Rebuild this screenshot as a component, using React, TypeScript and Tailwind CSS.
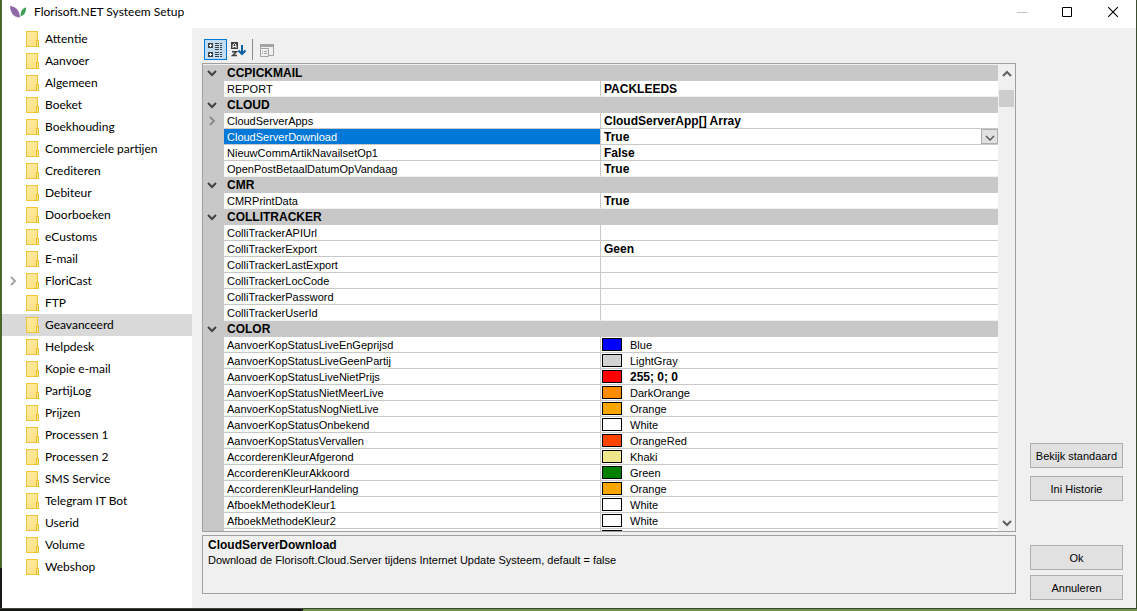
const folders = [
  'Attentie', 'Aanvoer', 'Algemeen', 'Boeket', 'Boekhouding', 'Commerciele partijen', 'Crediteren',
  'Debiteur', 'Doorboeken', 'eCustoms', 'E-mail', 'FloriCast', 'FTP', 'Geavanceerd', 'Helpdesk',
  'Kopie e-mail', 'PartijLog', 'Prijzen', 'Processen 1', 'Processen 2', 'SMS Service',
  'Telegram IT Bot', 'Userid', 'Volume', 'Webshop',
];

type Row = {
  name: string;
  value?: string;
  category?: boolean;
  plain?: boolean;
  swatch?: string;
  expandable?: boolean;
  selected?: boolean;
};

const rows: Row[] = [
  { name: 'CCPICKMAIL', category: true },
  { name: 'REPORT', value: 'PACKLEEDS' },
  { name: 'CLOUD', category: true },
  { name: 'CloudServerApps', value: 'CloudServerApp[] Array', expandable: true },
  { name: 'CloudServerDownload', value: 'True', selected: true },
  { name: 'NieuwCommArtikNavailsetOp1', value: 'False' },
  { name: 'OpenPostBetaalDatumOpVandaag', value: 'True' },
  { name: 'CMR', category: true },
  { name: 'CMRPrintData', value: 'True' },
  { name: 'COLLITRACKER', category: true },
  { name: 'ColliTrackerAPIUrl' },
  { name: 'ColliTrackerExport', value: 'Geen' },
  { name: 'ColliTrackerLastExport' },
  { name: 'ColliTrackerLocCode' },
  { name: 'ColliTrackerPassword' },
  { name: 'ColliTrackerUserId' },
  { name: 'COLOR', category: true },
  { name: 'AanvoerKopStatusLiveEnGeprijsd', value: 'Blue', plain: true, swatch: 'bg-[#0000ff]' },
  { name: 'AanvoerKopStatusLiveGeenPartij', value: 'LightGray', plain: true, swatch: 'bg-[#d3d3d3]' },
  { name: 'AanvoerKopStatusLiveNietPrijs', value: '255; 0; 0', swatch: 'bg-[#ff0000]' },
  { name: 'AanvoerKopStatusNietMeerLive', value: 'DarkOrange', plain: true, swatch: 'bg-[#ff8c00]' },
  { name: 'AanvoerKopStatusNogNietLive', value: 'Orange', plain: true, swatch: 'bg-[#ffa500]' },
  { name: 'AanvoerKopStatusOnbekend', value: 'White', plain: true, swatch: 'bg-white' },
  { name: 'AanvoerKopStatusVervallen', value: 'OrangeRed', plain: true, swatch: 'bg-[#ff4500]' },
  { name: 'AccorderenKleurAfgerond', value: 'Khaki', plain: true, swatch: 'bg-[#f0e68c]' },
  { name: 'AccorderenKleurAkkoord', value: 'Green', plain: true, swatch: 'bg-[#008000]' },
  { name: 'AccorderenKleurHandeling', value: 'Orange', plain: true, swatch: 'bg-[#ffa500]' },
  { name: 'AfboekMethodeKleur1', value: 'White', plain: true, swatch: 'bg-white' },
  { name: 'AfboekMethodeKleur2', value: 'White', plain: true, swatch: 'bg-white' },
  { name: '', plain: true, swatch: 'bg-white' },
];

function Chevron({ dir, className }: { dir: 'down' | 'up' | 'right'; className: string }) {
  const d = { down: 'M1 3l4 4 4-4', up: 'M1 7l4-4 4 4', right: 'M3 1l4 4-4 4' }[dir];
  return (
    <svg viewBox="0 0 10 10" className={`size-[10px] shrink-0 ${className}`} fill="none" stroke="currentColor" strokeWidth="2" aria-hidden="true">
      <path d={d} />
    </svg>
  );
}

function FolderIcon() {
  return (
    <svg viewBox="0 0 13 16" className="h-4 w-[13px] shrink-0" aria-hidden="true">
      <defs>
        <linearGradient id="folder" x1="0" y1="0" x2="1" y2="1">
          <stop offset="0" stopColor="#ffeca6" />
          <stop offset="1" stopColor="#fddf7c" />
        </linearGradient>
      </defs>
      <rect x=".5" y=".5" width="11" height="15" fill="url(#folder)" stroke="#ecc53a" />
      <rect x="10.5" y="9.5" width="2" height="6" fill="#ffe89c" stroke="#e9bf2c" />
    </svg>
  );
}

function TitleBar() {
  return (
    <header className="flex h-7 shrink-0 items-center bg-white pb-1 pl-2">
      <svg viewBox="0 0 16 12" className="h-3 w-4" aria-hidden="true">
        <path d="M0 0C4.500 0 9.600 3.500 10 11.500C4 11.500 .3 7 0 0z" fill="#8e67a8" />
        <path d="M10.700 10.500C10.200 6 12 2.500 16 1.300c.3 4.700-1.500 7.700-5.300 9.200z" fill="#3f9f52" />
      </svg>
      <h1 className="ml-2 flex-1 font-[Lato,sans-serif] text-[12px] leading-4 text-black">Florisoft.NET Systeem Setup</h1>
      <div className="flex h-full items-center">
        <button aria-label="Minimaliseren" className="flex h-full w-[45px] items-center justify-center text-[#c4c4c4]">
          <svg viewBox="0 0 10 10" className="size-[10px]" stroke="currentColor"><path d="M0 5.500h10" /></svg>
        </button>
        <button aria-label="Maximaliseren" className="flex h-full w-[46px] items-center justify-center text-black">
          <svg viewBox="0 0 10 10" className="size-[10px]" fill="none" stroke="currentColor"><path d="M.5.5h9v9h-9z" /></svg>
        </button>
        <button aria-label="Sluiten" className="flex h-full w-[46px] items-center justify-center text-black">
          <svg viewBox="0 0 10 10" className="size-[10px]" stroke="currentColor" strokeWidth="1.1"><path d="M0 0l10 10M10 0L0 10" /></svg>
        </button>
      </div>
    </header>
  );
}

function Sidebar() {
  return (
    <nav className="w-[190px] shrink-0 overflow-hidden bg-white font-[Lato,sans-serif] text-[12px] leading-4 text-black">
      {folders.map((f) => (
        <button key={f} className={`flex h-[22px] w-full items-center pl-[6px] text-left ${f === 'Geavanceerd' ? 'bg-[#d9d9d9]' : ''}`}>
          <span className="flex w-[18px] shrink-0 text-[#a6a6a6]">{f === 'FloriCast' && <Chevron dir="right" className="" />}</span>
          <FolderIcon />
          <span className="ml-[6px] whitespace-nowrap">{f}</span>
        </button>
      ))}
    </nav>
  );
}

function Toolbar() {
  return (
    <div className="flex h-[23px] shrink-0 items-start pl-[2px]">
      <button aria-label="Gecategoriseerd" className="flex h-[21px] w-[23px] items-center justify-center border border-[#0078d7] bg-[#c0dcf3]">
        <svg viewBox="0 0 15 15" className="size-[15px]" aria-hidden="true">
          <path d="M0 1h5v5H0zM0 10h5v5H0z" fill="#404040" />
          <path d="M1 3.500h3M2.500 2v3M1 12.500h3M2.500 11v3" stroke="#fff" />
          <path d="M7 1.500h4M7 3.500h4M7 5.500h4M7 7.500h4M7 10.500h4M7 12.500h4M7 14.500h4M12 1.500h2M12 3.500h2M12 5.500h2M12 7.500h2M12 10.500h2M12 12.500h2M12 14.500h2" stroke="#404040" />
        </svg>
      </button>
      <button aria-label="Alfabetisch" className="flex h-[21px] w-[23px] items-center justify-center">
        <svg viewBox="0 0 15 15" className="size-[15px]" aria-hidden="true">
          <path d="M0 0h7v7H0z" fill="#404040" />
          <path d="M2 6V3l1.500-1.500L5 3v3M2 4.500h3" fill="none" stroke="#fff" />
          <path d="M1 9.700h4.500L1.500 13.500H6" fill="none" stroke="#404040" strokeWidth="1.500" />
          <path d="M11 3v9M7.500 8.500l3.500 3.500L14.500 8.500" fill="none" stroke="#0b5f9e" strokeWidth="2" />
        </svg>
      </button>
      <span className="ml-[2px] h-[21px] w-px bg-[#8a8a8a]" />
      <button aria-label="Eigenschappenpagina's" disabled className="ml-[2px] flex h-[21px] w-[23px] items-center justify-center">
        <svg viewBox="0 0 14 14" className="size-[14px]" aria-hidden="true">
          <path d="M0 1h14v3H0z" fill="#a3a3a3" />
          <path d="M.5 1v4M13.500 1v11.500H9" fill="none" stroke="#a3a3a3" />
          <path d="M.5 5.500h8v8h-8z" fill="#f0f0f0" stroke="#a3a3a3" />
          <path d="M2 8.500h1M4 8.500h3M2 10.500h1M4 10.500h3" stroke="#a3a3a3" />
        </svg>
      </button>
    </div>
  );
}

function PropertyRow({ row, beforeCategory }: { row: Row; beforeCategory: boolean }) {
  if (row.category) {
    return (
      <tr className="h-4 bg-[#c8c8c8]">
        <td className="p-0"><Chevron dir="down" className="ml-[4px] text-[#404040]" /></td>
        <th colSpan={2} scope="colgroup" className="p-0 pl-[3px] text-left text-[12px] leading-[15px] font-bold">{row.name}</th>
      </tr>
    );
  }
  const line = beforeCategory ? 'border-[#f0f0f0]' : 'border-[#c8c8c8]';
  return (
    <tr className="h-4">
      <td className="bg-[#c8c8c8] p-0">{row.expandable && <Chevron dir="right" className="ml-[4px] text-[#8c8c8c]" />}</td>
      <th scope="row" className={`border-b p-0 pt-px pl-[3px] text-left font-normal ${line} ${row.selected ? 'bg-[#0078d7] text-white' : ''}`}>{row.name}</th>
      <td className={`border-b border-l border-l-[#c8c8c8] p-0 ${line}`}>
        {row.selected ? (
          <div className="relative flex h-[15px]">
            <select aria-label={row.name} defaultValue="True" className="w-full appearance-none pt-px pl-[3px] text-[12px] leading-[14px] font-bold outline-none">
              <option>True</option>
              <option>False</option>
            </select>
            <span className="pointer-events-none absolute top-0 right-0 flex h-[15px] w-[17px] items-center justify-center border border-[#adadad] bg-[#e1e1e1]">
              <svg viewBox="0 0 10 10" className="size-[10px]" fill="none" stroke="#505050" strokeWidth="1.300"><path d="M1 4l4 4 4-4" /></svg>
            </span>
          </div>
        ) : (
          <div className={`flex h-[15px] items-center ${row.swatch ? 'pl-px' : 'pl-[3px]'}`}>
            {row.swatch && <span className={`mr-2 h-[13px] w-[20px] border border-black ${row.swatch}`} />}
            <span className={`pt-px ${row.plain ? '' : 'text-[12px] font-bold'}`}>{row.value}</span>
          </div>
        )}
      </td>
    </tr>
  );
}

function PropertyGrid() {
  return (
    <div className="flex min-h-0 flex-1 overflow-hidden border border-[#a0a0a0] pt-px">
      <div className="min-w-0 flex-1 overflow-hidden bg-white">
        <table className="w-full table-fixed border-separate border-spacing-0 text-[11px] leading-[14px] text-black">
          <colgroup>
            <col className="w-[21px]" />
            <col className="w-[376px]" />
            <col />
          </colgroup>
          <tbody>
            {rows.map((row, i) => (
              <PropertyRow key={i} row={row} beforeCategory={!!rows[i + 1]?.category} />
            ))}
          </tbody>
        </table>
      </div>
      <div className="flex w-[17px] shrink-0 flex-col items-center text-[#606060]">
        <button aria-label="Omhoog" className="flex h-[17px] w-full items-center justify-center"><Chevron dir="up" className="" /></button>
        <div className="flex w-full flex-1 flex-col pt-[8px] pr-px pl-px">
          <div className="h-[17px] bg-[#cdcdcd]" />
        </div>
        <button aria-label="Omlaag" className="flex h-[17px] w-full items-center justify-center"><Chevron dir="down" className="" /></button>
      </div>
    </div>
  );
}

function ActionButton({ children }: { children: string }) {
  return (
    <button className="h-[25px] w-full border border-[#adadad] bg-[#e1e1e1] text-[11px] leading-4 whitespace-nowrap text-black">{children}</button>
  );
}

export default function App() {
  return (
    <div className="flex h-screen flex-col overflow-hidden font-['Liberation_Sans',sans-serif]">
      <div className="flex min-h-0 flex-1">
        <div className="flex w-[2px] shrink-0 flex-col bg-[#47682a]">
          <span className="mt-auto h-10 bg-[#17171a]" />
        </div>
        <main className="flex min-w-0 flex-1 flex-col bg-[#f0f0f0]">
          <TitleBar />
          <div className="flex min-h-0 flex-1">
            <Sidebar />
            <section className="flex min-w-0 flex-1 flex-col pt-[11px] pb-[14px] pl-[10px]">
              <Toolbar />
              <div className="mt-px flex min-h-0 flex-1 flex-col">
                <PropertyGrid />
                <div className="mt-[3px] h-[59px] shrink-0 border border-[#a0a0a0] pt-[2px] pl-[5px] text-black">
                  <h2 className="text-[12px] leading-[15px] font-bold">CloudServerDownload</h2>
                  <p className="text-[11px] leading-[15px]">Download de Florisoft.Cloud.Server tijdens Internet Update Systeem, default = false</p>
                </div>
              </div>
            </section>
            <aside className="flex w-[120px] shrink-0 flex-col justify-end gap-[5px] pr-[13px] pb-2 pl-[14px]">
              <div className="mb-[39px] flex flex-col gap-2">
                <ActionButton>Bekijk standaard</ActionButton>
                <ActionButton>Ini Historie</ActionButton>
              </div>
              <ActionButton>Ok</ActionButton>
              <ActionButton>Annuleren</ActionButton>
            </aside>
          </div>
        </main>
        <div className="w-px shrink-0 bg-[#3b4c2f]" />
      </div>
      <footer className="flex h-[3px] shrink-0 border-t border-[#3d4a36] bg-[#6f9148]">
        <span className="w-[303px] bg-[#15151a]" />
      </footer>
    </div>
  );
}
